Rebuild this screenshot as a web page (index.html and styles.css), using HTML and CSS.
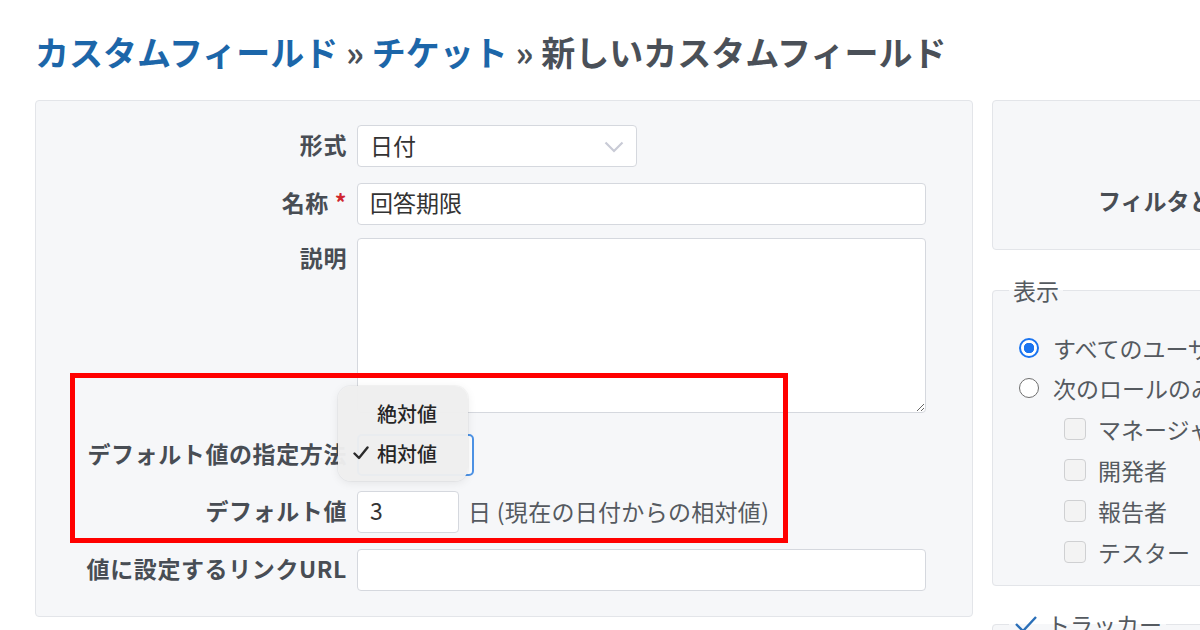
FILE: index.html
```html
<!DOCTYPE html>
<html>
  <head>
    <meta charset="utf-8">
    <link rel="stylesheet" href="styles.css">
  </head>
  <body>
    <div class="page">
      <h2 class="title">
        <a href="#">カスタムフィールド</a> » <a href="#">チケット</a> » 新しいカスタムフィールド
      </h2>

      <div class="columns">
        <div class="box main-box">
          <div class="row">
            <label class="label">形式</label>
            <div class="field">
              <div class="select select-format">
                <span>日付</span>
                <svg class="chevron" width="20" height="12" viewBox="0 0 20 12">
                  <path d="M1.5 1.5 L10 10 L18.5 1.5" fill="none" stroke="#c9cbd6" stroke-width="2.2" />
                </svg>
              </div>
            </div>
          </div>

          <div class="row row-name">
            <label class="label">名称 <span class="required">*</span></label>
            <div class="field">
              <div class="input input-wide">回答期限</div>
            </div>
          </div>

          <div class="row row-textarea">
            <label class="label">説明</label>
            <div class="field">
              <textarea class="textarea"></textarea>
            </div>
          </div>

          <div class="row row-method">
            <label class="label">デフォルト値の指定方法</label>
            <div class="field">
              <div class="select select-focus"></div>
              <!-- 開いているプルダウン -->
              <div class="popup">
                <div class="popup-item"><span class="tick"></span>絶対値</div>
                <div class="popup-item">
                  <span class="tick">
                    <svg width="16" height="14" viewBox="0 0 16 14">
                      <path d="M1.5 7.5 L6 12 L14.5 1.5" fill="none" stroke="#2b2b2b" stroke-width="2.4" stroke-linecap="round" stroke-linejoin="round" />
                    </svg>
                  </span>相対値
                </div>
              </div>
            </div>
          </div>

          <div class="row">
            <label class="label">デフォルト値</label>
            <div class="field field-inline">
              <div class="input input-small">3</div>
              <span class="suffix">日 (現在の日付からの相対値)</span>
            </div>
          </div>

          <div class="row">
            <label class="label">値に設定するリンクURL</label>
            <div class="field">
              <div class="input input-wide"></div>
            </div>
          </div>
        </div>

        <div class="side">
          <div class="box side-top">
            <span class="side-title">フィルタとして使用</span>
          </div>

          <fieldset class="box side-set">
            <legend>表示</legend>
            <div class="opt"><span class="radio on"></span>すべてのユーザー</div>
            <div class="opt"><span class="radio"></span>次のロールのみ</div>
            <div class="opt opt-sub"><span class="check"></span>マネージャー</div>
            <div class="opt opt-sub"><span class="check"></span>開発者</div>
            <div class="opt opt-sub"><span class="check"></span>報告者</div>
            <div class="opt opt-sub"><span class="check"></span>テスター</div>
          </fieldset>

          <fieldset class="box side-set tracker-set">
            <legend>
              <svg width="24" height="18" viewBox="0 0 24 18">
                <path d="M2 9 L9 16 L22 2" fill="none" stroke="#2a6fb8" stroke-width="2.4" />
              </svg>
              トラッカー
            </legend>
          </fieldset>
        </div>
      </div>

      <!-- 注釈の赤枠 -->
      <div class="annotation"></div>
    </div>
  </body>
</html>
```

FILE: styles.css
```css
/* 新しいカスタムフィールド画面 */
body {
  margin: 0;
  width: 1200px;
  height: 630px;
  overflow: hidden;
  background-color: #fff;
  font-family: "Noto Sans CJK JP", "Noto Sans", sans-serif;
  color: #484d54;
}

.page {
  position: relative;
  padding-left: 35px;
}

.title {
  margin: 0 0 28px;
  padding-top: 32px;
  font-size: 34px;
  line-height: 40px;
  font-weight: 700;
  color: #4a5058;
  white-space: nowrap;
}

.title a {
  color: #1c66a9;
  text-decoration: none;
}

.columns {
  display: flex;
  align-items: flex-start;
  gap: 19px;
}

.box {
  background-color: #f6f7f9;
  border: 1px solid #e3e5e9;
  border-radius: 4px;
  box-sizing: border-box;
}

/* 左側のフォーム */
.main-box {
  width: 938px;
  flex-shrink: 0;
  padding: 24px 0 25px;
}

.row {
  display: grid;
  grid-template-columns: 311px 569px;
  column-gap: 10px;
  margin-bottom: 16px;
}

.row:last-child {
  margin-bottom: 0;
}

.row-name {
  margin-bottom: 13px;
}

.row-textarea {
  margin-bottom: 21px;
}

.row-method {
  margin-bottom: 15px;
}

.label {
  text-align: right;
  font-size: 23px;
  font-weight: 700;
  letter-spacing: 0.6px;
  line-height: 38px;
  white-space: nowrap;
}

.required {
  color: #d0262f;
}

.field {
  position: relative;
}

.field-inline {
  display: flex;
  align-items: center;
  gap: 9px;
}

.input,
.select,
.textarea {
  box-sizing: border-box;
  height: 42px;
  background-color: #fff;
  border: 1px solid #d5d8de;
  border-radius: 4px;
  padding: 0 12px 3px;
  font-family: inherit;
  font-size: 23px;
  line-height: 36px;
  color: #333;
}

.input-wide {
  width: 569px;
}

.input-small {
  width: 102px;
}

.textarea {
  display: block;
  width: 569px;
  height: 175px;
  margin: 0;
}

.select {
  display: flex;
  align-items: center;
  justify-content: space-between;
}

.select-format {
  width: 280px;
}

.chevron {
  margin-top: 4px;
}

.select-focus {
  width: 117px;
  border: 2px solid #4d93e6;
  border-radius: 5px;
}

.suffix {
  font-size: 23px;
  letter-spacing: 0.3px;
  color: #555a60;
  white-space: nowrap;
  margin-top: -3px;
}

/* macOS 風のプルダウン */
.popup {
  position: absolute;
  left: -19px;
  top: -48px;
  width: 130px;
  height: 95px;
  box-sizing: border-box;
  padding-top: 7px;
  background-color: rgba(238, 238, 238, 0.97);
  border-radius: 13px;
  box-shadow: 0 2px 10px rgba(0, 0, 0, 0.08), 0 0 0 1px rgba(0, 0, 0, 0.03);
}

.popup-item {
  display: flex;
  align-items: center;
  height: 40px;
  font-size: 20px;
  font-weight: 500;
  color: #262626;
}

.tick {
  display: inline-flex;
  width: 39px;
  padding-left: 15px;
  box-sizing: border-box;
}

/* 右側 */
.side {
  width: 300px;
  flex-shrink: 0;
}

.side-top {
  height: 150px;
  padding: 80px 0 0 105px;
}

.side-title {
  font-size: 23px;
  font-weight: 700;
  line-height: 38px;
  white-space: nowrap;
}

.side-set {
  margin: 26px 0 0;
  padding: 0 0 13px 16px;
  font-size: 23px;
  color: #555a60;
}

.side-set legend {
  padding: 0 4px;
  line-height: 28px;
  display: flex;
  align-items: center;
  gap: 9px;
}

.side-set legend svg {
  margin-left: 1px;
}

.opt {
  display: flex;
  align-items: center;
  gap: 14px;
  height: 40px;
  padding-left: 10px;
  white-space: nowrap;
}

.opt:first-of-type {
  margin-top: 24px;
}

.opt-sub {
  height: 41px;
  padding-left: 55px;
  gap: 12px;
}

.radio {
  width: 20px;
  height: 20px;
  box-sizing: border-box;
  border: 1.5px solid #6f6f6f;
  border-radius: 50%;
  background-color: #fff;
  flex-shrink: 0;
}

.radio.on {
  border: 2px solid #1a74f0;
  background: radial-gradient(circle, #1a74f0 0 5px, #fff 5.5px);
}

.check {
  width: 22px;
  height: 22px;
  box-sizing: border-box;
  border: 1px solid #cfd0d2;
  border-radius: 4px;
  background-color: #f3f3f3;
  flex-shrink: 0;
}

.tracker-set {
  margin-top: 24px;
  height: 40px;
}

.annotation {
  position: absolute;
  left: 70px;
  top: 373px;
  width: 718px;
  height: 170px;
  box-sizing: border-box;
  border: 5px solid #ff0000;
}
```
